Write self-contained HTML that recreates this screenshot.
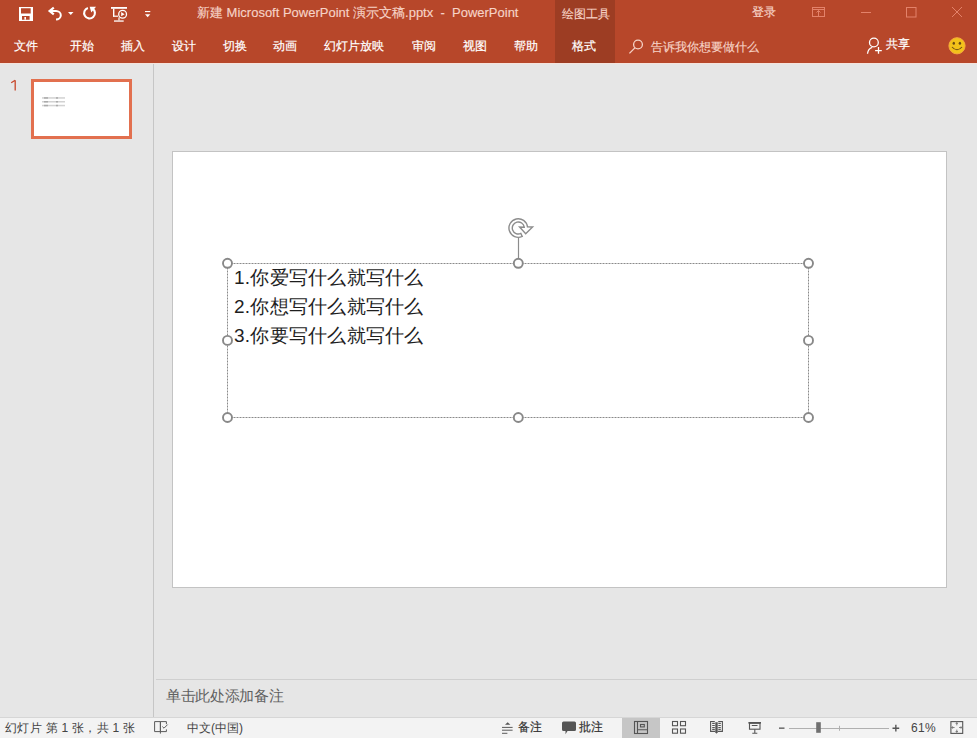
<!DOCTYPE html>
<html><head><meta charset="utf-8">
<style>
*{margin:0;padding:0;box-sizing:border-box}
html,body{width:977px;height:738px;overflow:hidden;background:#E6E6E6;font-family:"Liberation Sans",sans-serif}
#top{position:absolute;left:0;top:0;width:977px;height:63px;background:#B7472A}
#ctx{position:absolute;left:555px;top:0;width:60px;height:63px;background:#9D3D23}
#uline{position:absolute;left:0;top:63px;width:977px;height:1px;background:#F5E3DC}
.t{position:absolute;white-space:nowrap;line-height:1}
.title{color:#F6D3C7;font-size:13px;-webkit-text-stroke:0.15px #F6D3C7}
.tab{color:#FFFFFF;font-size:12px;top:40px;-webkit-text-stroke:0.2px #fff}
#vdiv{position:absolute;left:153px;top:64px;width:1px;height:653px;background:#C6C6C6}
#slide{position:absolute;left:172px;top:151px;width:775px;height:437px;background:#fff;border:1px solid #C3C3C3}
#ndiv{position:absolute;left:156px;top:679px;width:821px;height:1px;background:#CFCFCF}
#status{position:absolute;left:0;top:717px;width:977px;height:21px;background:#F3F3F3;border-top:1px solid #D6D6D6}
#selbtn{position:absolute;left:622px;top:718px;width:38px;height:20px;background:#C6C6C6}
.st{color:#444;font-size:12px;top:722px;letter-spacing:0.3px}
.stb{color:#333;font-size:12px;top:721px;-webkit-text-stroke:0.2px #333}
#thumb{position:absolute;left:31px;top:79px;width:101px;height:60px;border:3px solid #E2704F;background:#fff}
.slt{position:absolute;left:234px;font-size:19px;letter-spacing:0.25px;color:#1E1E1E;white-space:nowrap;line-height:1;font-weight:300}
svg{position:absolute;left:0;top:0}
</style></head><body>
<div id="top"></div>
<div id="ctx"></div>
<div id="uline"></div>

<div class="t title" style="left:197px;top:6px">新建 Microsoft PowerPoint 演示文稿.pptx&nbsp; - &nbsp;PowerPoint</div>
<div class="t title" style="left:562px;top:8px;font-size:12px">绘图工具</div>
<div class="t title" style="left:752px;top:6px;font-size:12px">登录</div>

<div class="t tab" style="left:14px">文件</div>
<div class="t tab" style="left:70px">开始</div>
<div class="t tab" style="left:121px">插入</div>
<div class="t tab" style="left:172px">设计</div>
<div class="t tab" style="left:223px">切换</div>
<div class="t tab" style="left:273px">动画</div>
<div class="t tab" style="left:324px">幻灯片放映</div>
<div class="t tab" style="left:412px">审阅</div>
<div class="t tab" style="left:463px">视图</div>
<div class="t tab" style="left:514px">帮助</div>
<div class="t tab" style="left:572px">格式</div>
<div class="t title" style="left:651px;top:41px;font-size:12px">告诉我你想要做什么</div>
<div class="t tab" style="left:886px;top:38px">共享</div>

<div id="vdiv"></div>

<div id="thumb"></div>
<div id="slide"></div>
<svg width="977" height="738" viewBox="0 0 977 738">
<g fill="#D2D2D2"><rect x="42" y="97.2" width="23" height="1.5"/><rect x="42" y="101" width="23" height="1.5"/><rect x="42" y="104.8" width="23" height="1.5"/></g>
<g fill="#ABABAB"><rect x="44" y="97.2" width="4" height="1.5"/><rect x="56" y="97.2" width="2" height="1.5"/><rect x="44" y="101" width="4" height="1.5"/><rect x="56" y="101" width="2" height="1.5"/><rect x="44" y="104.8" width="4" height="1.5"/><rect x="56" y="104.8" width="2" height="1.5"/></g>
</svg>
<div class="slt" style="top:268px">1.你爱写什么就写什么</div>
<div class="slt" style="top:297px">2.你想写什么就写什么</div>
<div class="slt" style="top:326px">3.你要写什么就写什么</div>

<div id="ndiv"></div>
<div class="t" style="left:166px;top:688px;font-size:15px;color:#5F5F5F;letter-spacing:-0.35px">单击此处添加备注</div>
<div id="status"></div>
<div id="selbtn"></div>
<div class="t st" style="left:5px">幻灯片 第 1 张，共 1 张</div>
<div class="t st" style="left:187px;letter-spacing:0">中文(中国)</div>
<div class="t stb" style="left:518px">备注</div>
<div class="t stb" style="left:579px">批注</div>
<div class="t st" style="left:911px">61%</div>

<svg width="977" height="738" viewBox="0 0 977 738">
<!-- QAT -->
<path d="M15.2 80.2V90.6M11.2 82.8L15.2 80.3" fill="none" stroke="#C8472B" stroke-width="1.3"/>
<path fill="#fff" fill-rule="evenodd" d="M19 7h14v14H19z M21 8.3h9.7v5.1H21z M22 16h7.6v3.7H22z"/>
<rect x="24.4" y="17" width="1.6" height="2.7" fill="#fff"/>
<path d="M50 11H56A4.8 4.3 0 0 1 56 19.6" fill="none" stroke="#fff" stroke-width="2"/>
<path d="M53.8 7.6L49.6 11L53.8 14.4" fill="none" stroke="#fff" stroke-width="2.2"/>
<path d="M68 12H73.5L70.75 15z" fill="#fff"/>
<path d="M92.6 8.6A5.4 5.4 0 1 1 87.9 7.9" fill="none" stroke="#fff" stroke-width="2.1"/>
<path d="M89.7 6.7H96L91.3 12.6z" fill="#fff"/>
<rect x="111" y="7" width="16" height="1.8" fill="#fff"/>
<rect x="113" y="8.6" width="1.4" height="8" fill="#fff"/>
<rect x="113" y="15.6" width="5" height="1.2" fill="#fff"/>
<circle cx="122.6" cy="14.2" r="3.9" fill="none" stroke="#fff" stroke-width="1.3"/>
<path d="M121.2 12.1V16.3L124.6 14.2z" fill="#fff"/>
<rect x="118.4" y="17.4" width="1.2" height="3" fill="#fff"/>
<rect x="114" y="20.4" width="9.7" height="1.3" fill="#fff"/>
<rect x="145" y="11" width="5.3" height="1.1" fill="#fff"/>
<path d="M145 14.2H150.3L147.65 17.2z" fill="#fff"/>
<!-- window controls -->
<g stroke="#E3826A" stroke-width="1" fill="none">
<rect x="812.5" y="7.5" width="12" height="9"/>
<path d="M812.5 9.5H824.5 M818.5 10.5V16.5 M816.5 12.5L818.5 10.5L820.5 12.5"/>
<path d="M861 12.5H871"/>
<rect x="906.5" y="7.5" width="9.5" height="9.5"/>
<path d="M952 7L962 17M962 7L952 17"/>
</g>
<!-- tell me -->
<g stroke="#F6D3C7" stroke-width="1.3" fill="none">
<circle cx="638" cy="44.5" r="4.4"/>
<path d="M634.9 47.9L629.4 53.4"/>
</g>
<!-- share -->
<g stroke="#FFF" stroke-width="1.3" fill="none">
<circle cx="873.9" cy="42.5" r="4.4"/>
<path d="M867.5 53.8C867.8 50.5 869.8 48 872.3 47.3"/>
<path d="M878.5 47V53.8M875.1 50.6H881.8"/>
</g>
<!-- smiley -->
<circle cx="957" cy="45.8" r="8.1" fill="#F2C21A" stroke="#F6A83C" stroke-width="1"/>
<ellipse cx="953.8" cy="43.3" rx="1.2" ry="1.5" fill="#6B4A12"/>
<ellipse cx="959.9" cy="43.3" rx="1.2" ry="1.5" fill="#6B4A12"/>
<path d="M952 47Q957 52.5 962 47" fill="none" stroke="#6B4A12" stroke-width="1.1"/>

<!-- selection box -->
<g fill="none" stroke="#8A8A8A" stroke-width="1" stroke-dasharray="2 1">
<path d="M227.5 263.5H808.5V417.5H227.5Z"/>
</g>
<path d="M518.5 238V258.5" stroke="#8C8C8C" stroke-width="1.2"/>
<g fill="#fff" stroke="#888888" stroke-width="1.9">
<circle cx="227.5" cy="263.3" r="4.5"/>
<circle cx="518.3" cy="263.3" r="4.5"/>
<circle cx="808.5" cy="263.3" r="4.5"/>
<circle cx="227.5" cy="340.4" r="4.5"/>
<circle cx="808.5" cy="340.4" r="4.5"/>
<circle cx="227.5" cy="417.5" r="4.5"/>
<circle cx="518.3" cy="417.5" r="4.5"/>
<circle cx="808.5" cy="417.5" r="4.5"/>
</g>
<!-- rotate -->
<path d="M520.84 233.44A6 6 0 1 1 524.24 227.17L519.6 227L525.7 233.8L532.6 227L527.5 226.9A9.3 9.3 0 1 0 522.23 236.43Z" fill="#fff" stroke="#8C8C8C" stroke-width="1.4" stroke-linejoin="miter"/>

<!-- status icons -->
<g fill="none" stroke="#5A5A5A" stroke-width="1">
<path d="M154.6 721.6H160.4V731.6H154.6Z"/>
<path d="M160.4 721.6H166.4V724.2 M166.4 729.4V731.6H160.4 M160.4 721.6V733.6"/>
<path d="M162.4 726.6L164 728.2L167.6 724.6"/>
<path d="M502 727.4H512.6M502 730.2H512.6M502 733.3H507.4"/>
</g>
<path d="M505 724.8L507.7 722.3L510.4 724.8z" fill="#555"/>
<path d="M563.5 721.5H574.5Q576 721.5 576 723V729.5Q576 731 574.5 731H567.5L565.5 734.2V731H563.5Q562 731 562 729.5V723Q562 721.5 563.5 721.5z" fill="#555"/>
<g fill="none" stroke="#555" stroke-width="1.1">
<rect x="634.5" y="721.5" width="13" height="12"/>
<path d="M637.5 721.5V733.5M637.5 729.8H647.5"/>
<rect x="640.5" y="724.5" width="3.8" height="2.4"/>
<rect x="672.5" y="721.5" width="5" height="4.2"/>
<rect x="680.5" y="721.5" width="5" height="4.2"/>
<rect x="672.5" y="729" width="5" height="4.2"/>
<rect x="680.5" y="729" width="5" height="4.2"/>
<path d="M714.8 721.5H710.6V731.4H715.3 M718.2 721.5H722.4V731.4H717.7"/>
<path d="M712.2 723.4H714.8M712.2 725.5H714.8M712.2 727.5H714.8M712.2 729.4H714.8M718.3 723.4H720.8M718.3 725.5H720.8M718.3 727.5H720.8M718.3 729.4H720.8"/>
<rect x="749.5" y="723.2" width="10.5" height="6"/>
<path d="M751.8 725.5H757.5M754.8 729.2V733.2M752.3 733.2H757.3"/>
</g>
<rect x="748.4" y="722" width="12.6" height="1.6" fill="#555"/>
<path d="M715.3 722.3H717.7V732.2L716.5 733.8L715.3 732.2Z" fill="#555"/>
<!-- zoom slider -->
<rect x="779" y="727.5" width="5.5" height="1.3" fill="#555"/>
<rect x="789" y="728" width="100" height="1" fill="#B0B0B0"/>
<rect x="839" y="725.8" width="1" height="5" fill="#B0B0B0"/>
<rect x="816.2" y="722.2" width="4.6" height="10.6" fill="#707070"/>
<path d="M892.5 728.2H899.2M895.85 724.8V731.6" stroke="#555" stroke-width="1.4"/>
<g fill="none" stroke="#555" stroke-width="1">
<rect x="950.9" y="721.6" width="11.8" height="11.8" stroke-width="1.1"/>
<path stroke="#777" stroke-width="0.9" d="M956.8 721.6V725.4M955.6 723.4H958M956.8 729.6V733.4M955.6 731.5H958M950.9 727.5H954.6M952.6 726.3V728.7M959 727.5H962.7M961 726.3V728.7"/>
</g>
</svg>
</body></html>
